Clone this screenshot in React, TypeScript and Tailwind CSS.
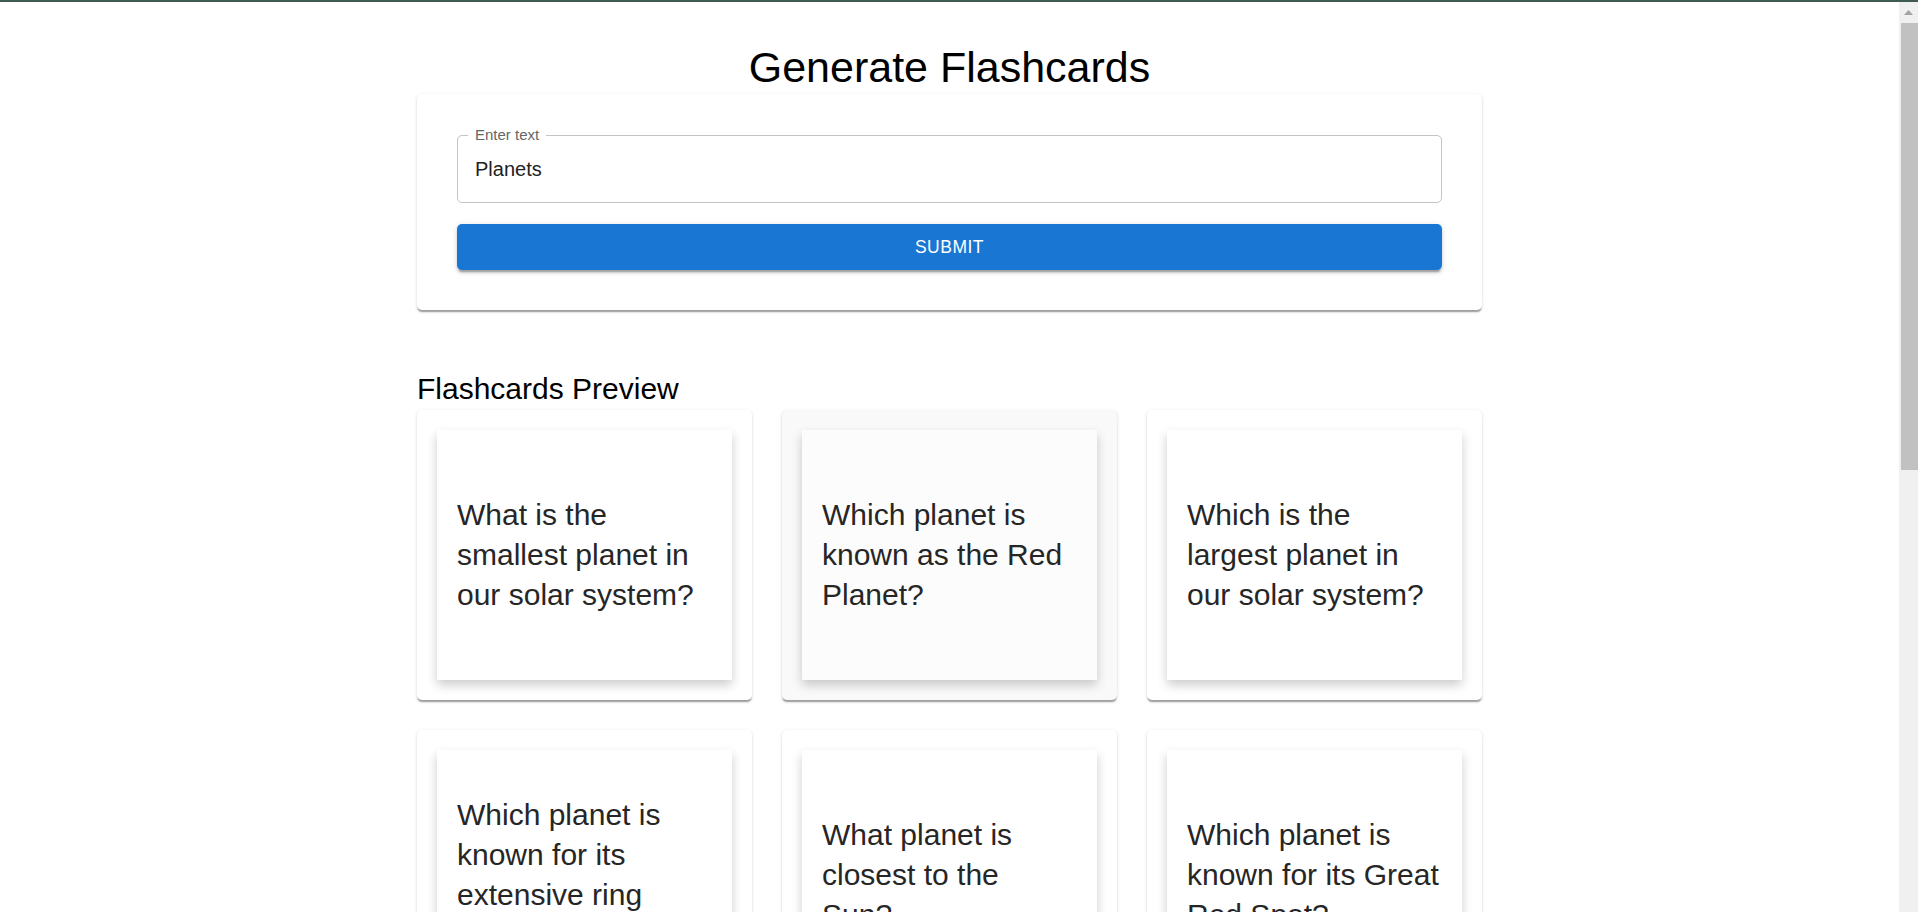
import { useState } from 'react'

const cards = [
  'What is the smallest planet in our solar system?',
  'Which planet is known as the Red Planet?',
  'Which is the largest planet in our solar system?',
  'Which planet is known for its extensive ring system?',
  'What planet is closest to the Sun?',
  'Which planet is known for its Great Red Spot?',
]

// hovered card in the reference is the second one
const HOVERED = 1

function Flashcard({ text, hovered }: { text: string; hovered: boolean }) {
  return (
    <div
      className={`rounded-[5px] p-[20px] shadow-[0_2.5px_1.25px_-1.25px_rgba(0,0,0,0.2),0_1.25px_1.25px_0_rgba(0,0,0,0.14),0_1.25px_3.75px_0_rgba(0,0,0,0.12)] ${
        hovered ? 'bg-[#f9f9f9]' : 'bg-white'
      }`}
    >
      <div
        className={`h-[250px] flex items-center p-[20px] shadow-[0_5px_10px_0_rgba(0,0,0,0.2)] ${
          hovered ? 'bg-[#fcfcfc]' : 'bg-white'
        }`}
      >
        <p className="text-[30px] leading-[40px] text-[#262626]">{text}</p>
      </div>
    </div>
  )
}

function FakeScrollbar() {
  return (
    <aside className="w-[19px] shrink-0 bg-[#f0f0f0] flex flex-col">
      <div className="h-[21px] flex items-center justify-center">
        <svg width="9" height="5" viewBox="0 0 9 5">
          <polygon points="4.5,0 9,5 0,5" fill="#a3a3a3" />
        </svg>
      </div>
      <div className="h-[447px] ml-[2px] bg-[#c1c1c1]" />
    </aside>
  )
}

export default function App() {
  const [text, setText] = useState('Planets')

  return (
    <div className="h-screen overflow-hidden bg-white font-['Liberation_Sans',Arial,sans-serif] flex flex-col">
      <div className="h-[2px] shrink-0 bg-[#3f5a50]" />
      <div className="flex flex-1 min-h-0">
        <main className="flex-1 overflow-hidden">
          <div className="mx-auto max-w-[1125px] px-[30px]">
            <h1 className="mt-[39px] text-center text-[43px] leading-[53px] text-black">
              Generate Flashcards
            </h1>

            <div className="rounded-[5px] bg-white pt-[41px] pb-[40px] px-[40px] shadow-[0_2.5px_1.25px_-1.25px_rgba(0,0,0,0.2),0_1.25px_1.25px_0_rgba(0,0,0,0.14),0_1.25px_3.75px_0_rgba(0,0,0,0.12)]">
              <div className="relative h-[68px] rounded-[5px] border border-[#c4c4c4] flex items-center">
                <span className="absolute left-[10px] top-[-9px] bg-white px-[7px] text-[15px] leading-[15px] text-[#666666]">
                  Enter text
                </span>
                <input
                  value={text}
                  onChange={e => setText(e.target.value)}
                  className="w-full h-full bg-transparent px-[17px] text-[20px] text-[#222222] outline-none"
                />
              </div>
              <button className="mt-[21px] h-[46px] w-full rounded-[5px] bg-[#1976d2] text-white text-[17.5px] font-medium tracking-[0.5px] uppercase shadow-[0_3.75px_1.25px_-2.5px_rgba(0,0,0,0.2),0_2.5px_2.5px_0_rgba(0,0,0,0.14),0_1.25px_6.25px_0_rgba(0,0,0,0.12)]">
                Submit
              </button>
            </div>

            <h2 className="mt-[59px] mb-px text-[30px] leading-[40px] text-black">Flashcards Preview</h2>
            <div className="grid grid-cols-3 gap-[30px] pb-[40px]">
              {cards.map((c, i) => (
                <Flashcard key={i} text={c} hovered={i === HOVERED} />
              ))}
            </div>
          </div>
        </main>
        <FakeScrollbar />
      </div>
    </div>
  )
}
